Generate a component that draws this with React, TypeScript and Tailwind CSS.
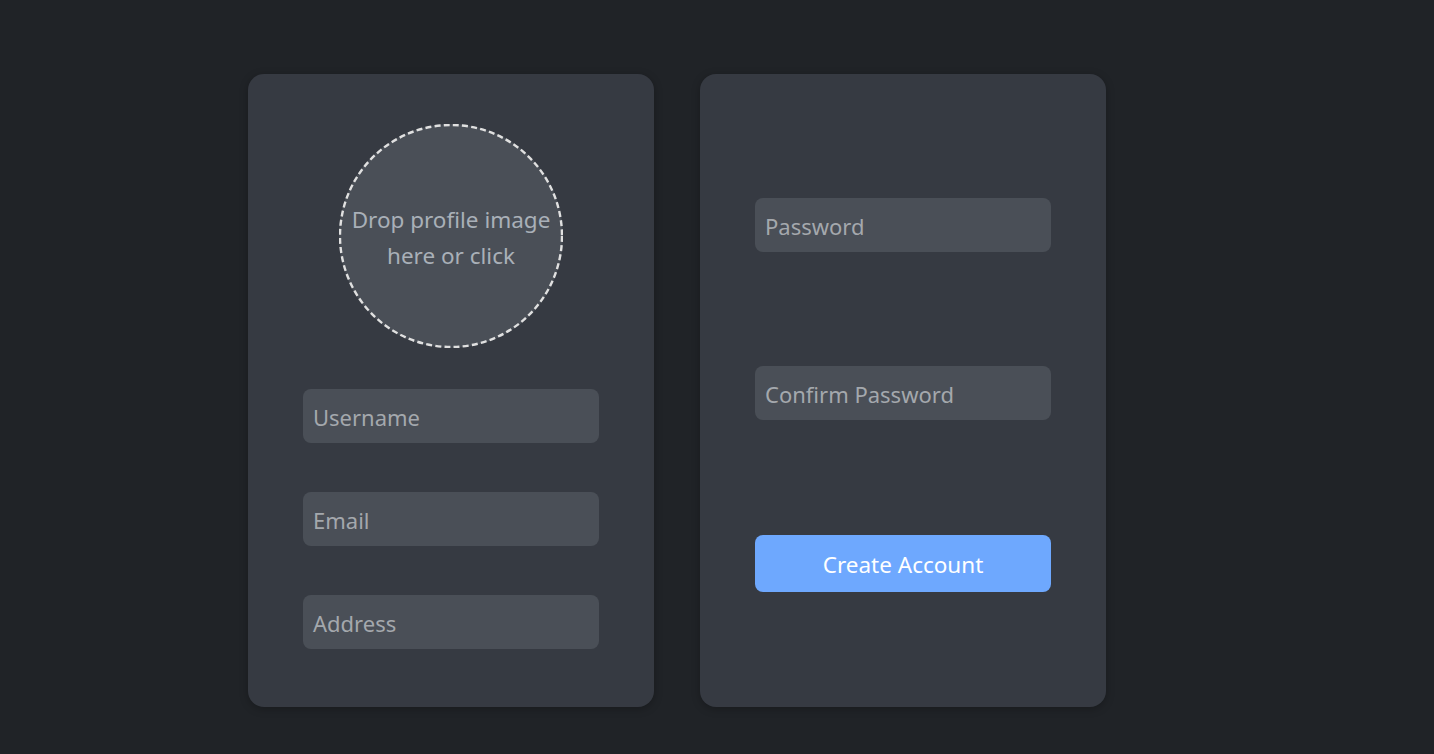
import React from "react";

const font = { fontFamily: '"Noto Sans", "Open Sans", sans-serif' };

function Field({ label }: { label: string }) {
  return (
    <div className="h-[54px] w-[296px] rounded-[8px] bg-[#4a4f57] flex items-center pl-[10px] pt-[3px] text-[22px] text-[#a4a8ad]">
      {label}
    </div>
  );
}

export default function App() {
  return (
    <div className="min-h-[754px] w-full bg-[#202327]" style={font}>
      <div className="flex gap-[46px] pl-[248px] pt-[74px]">
        <div className="w-[406px] h-[633px] rounded-[16px] bg-[#363a42] shadow-[0_2px_8px_rgba(0,0,0,0.25)] flex flex-col items-center pt-[50px]">
          <div className="relative w-[224px] h-[224px] rounded-full bg-[#4a4f57] flex items-center justify-center text-center text-[22.5px] leading-[36px] text-[#a9b0b8] pt-[4px]">
            <svg className="absolute inset-0" width="224" height="224" viewBox="0 0 224 224">
              <circle cx="112" cy="112" r="111" fill="none" stroke="#e0e0e0" strokeWidth="2.4" strokeDasharray="6 3.2" />
            </svg>
            <span className="relative">
              Drop profile image
              <br />
              here or click
            </span>
          </div>
          <div className="mt-[41px] flex flex-col gap-[49px]">
            <Field label="Username" />
            <Field label="Email" />
            <Field label="Address" />
          </div>
        </div>
        <div className="w-[406px] h-[633px] rounded-[16px] bg-[#363a42] shadow-[0_2px_8px_rgba(0,0,0,0.25)] flex flex-col items-center pt-[124px]">
          <Field label="Password" />
          <div className="mt-[114px]">
            <Field label="Confirm Password" />
          </div>
          <button className="mt-[115px] h-[57px] w-[296px] rounded-[8px] bg-[#6ea8fe] text-white text-[22.5px] flex items-center justify-center pt-[3px]">
            Create Account
          </button>
        </div>
      </div>
    </div>
  );
}
